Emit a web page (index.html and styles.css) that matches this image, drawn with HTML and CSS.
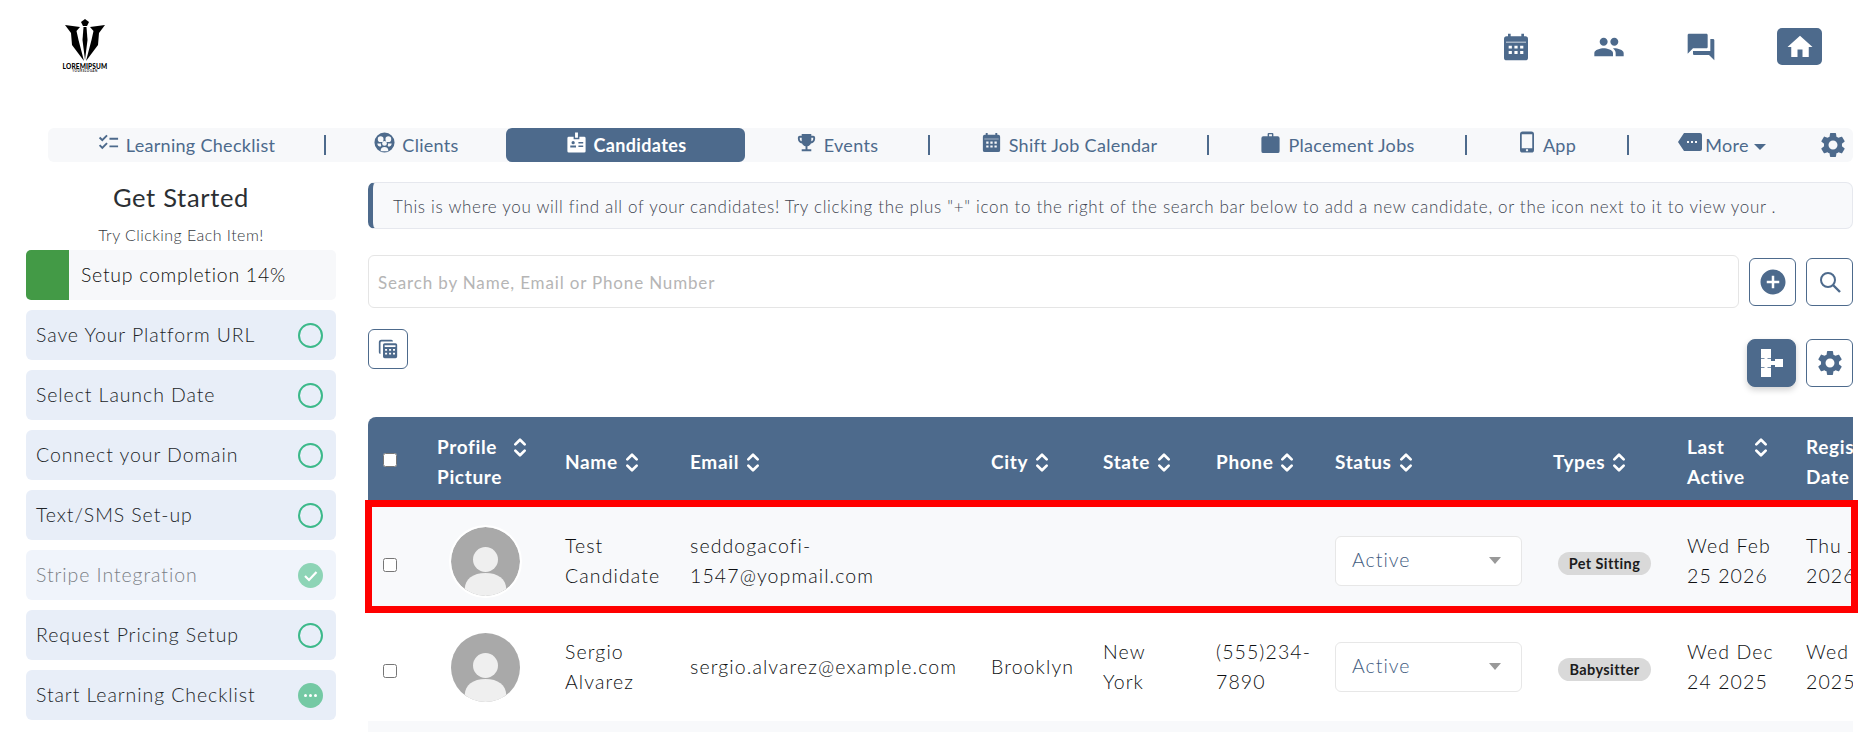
FILE: index.html
```html
<!DOCTYPE html>
<html lang="en">
<head>
<meta charset="utf-8">
<title>Candidates</title>
<link rel="stylesheet" href="styles.css">
</head>
<body>
<svg class="defs" aria-hidden="true">
  <symbol id="i-cal" viewBox="0 0 24 24"><path fill-rule="evenodd" d="M5 4h1V2h2v2h8V2h2v2h1a2 2 0 0 1 2 2v14a2 2 0 0 1-2 2H5a2 2 0 0 1-2-2V6a2 2 0 0 1 2-2zM4.500 8v.7h15V8zM6.500 11v2.200h2.400V11zM10.800 11v2.200h2.400V11zM15.100 11v2.200h2.400V11zM6.500 15v2.200h2.400V15zM10.800 15v2.200h2.400V15zM15.100 15v2.200h2.400V15z"/></symbol>
  <symbol id="i-people" viewBox="0 0 24 24"><path d="M16 11c1.660 0 2.990-1.340 2.990-3S17.660 5 16 5c-1.660 0-3 1.340-3 3s1.340 3 3 3zm-8 0c1.660 0 2.990-1.340 2.990-3S9.660 5 8 5C6.340 5 5 6.340 5 8s1.340 3 3 3zm0 2c-2.330 0-7 1.170-7 3.500V19h14v-2.500c0-2.330-4.670-3.500-7-3.500zm8 0c-.29 0-.62.02-.97.05 1.160.84 1.970 1.970 1.970 3.450V19h6v-2.500c0-2.330-4.670-3.500-7-3.500z"/></symbol>
  <symbol id="i-forum" viewBox="0 0 24 24"><path d="M21 6h-2v9H6v2c0 .55.45 1 1 1h11l4 4V7c0-.55-.45-1-1-1zm-4 6V3c0-.55-.45-1-1-1H3c-.55 0-1 .45-1 1v14l4-4h10c.55 0 1-.45 1-1z"/></symbol>
  <symbol id="i-home" viewBox="0 0 24 24"><path d="M10 20v-6h4v6h5v-8h3L12 3 2 12h3v8z"/></symbol>
  <symbol id="i-gear" viewBox="0 0 24 24"><path d="M19.140 12.940c.04-.3.06-.61.06-.94 0-.32-.02-.64-.07-.94l2.030-1.580c.18-.14.23-.41.12-.61l-1.920-3.320c-.12-.22-.37-.29-.59-.22l-2.390.96c-.5-.38-1.030-.7-1.620-.94l-.36-2.540c-.04-.24-.24-.41-.48-.41h-3.840c-.24 0-.43.17-.47.41l-.36 2.540c-.59.24-1.130.57-1.620.94l-2.390-.96c-.22-.08-.47 0-.59.22L2.740 8.870c-.12.21-.08.47.12.61l2.030 1.580c-.05.3-.09.63-.09.94s.02.64.07.94l-2.030 1.580c-.18.14-.23.41-.12.61l1.920 3.320c.12.22.37.29.59.22l2.390-.96c.5.38 1.030.7 1.620.94l.36 2.540c.05.24.24.41.48.41h3.840c.24 0 .44-.17.47-.41l.36-2.540c.59-.24 1.130-.56 1.620-.94l2.390.96c.22.08.47 0 .59-.22l1.920-3.320c.12-.22.07-.47-.12-.61l-2.010-1.580zM12 15.600c-1.980 0-3.600-1.620-3.600-3.600s1.620-3.600 3.600-3.600 3.600 1.620 3.600 3.600-1.620 3.600-3.600 3.600z"/></symbol>
  <symbol id="i-check" viewBox="0 0 24 24"><path d="M22 7h-9v2h9V7zm0 8h-9v2h9v-2zM5.540 11 2 7.460l1.410-1.410 2.120 2.120 4.240-4.240 1.410 1.410L5.540 11zm0 8L2 15.460l1.410-1.410 2.120 2.120 4.240-4.240 1.410 1.410L5.540 19z"/></symbol>
  <symbol id="i-clients" viewBox="0 0 24 24"><path fill-rule="evenodd" d="M12 1.500a10.500 10.500 0 1 1 0 21 10.500 10.500 0 0 1 0-21zM8 5.500a3 3 0 1 0 0 6 3 3 0 0 0 0-6zM16 5.500a3 3 0 1 0 0 6 3 3 0 0 0 0-6zM12 10.500a2.500 2.500 0 1 0 0 5 2.500 2.500 0 0 0 0-5zM4.500 13c.2 1.800 1.200 3 3 3.500l1.300-1c-.7-1-.7-1.500-.3-2.500zM19.500 13c-.2 1.800-1.200 3-3 3.500l-1.300-1c.7-1 .7-1.500.3-2.500zM8 21l8 0c.2-2.800-1.500-4.300-4-4.300s-4.200 1.500-4 4.300z"/></symbol>
  <symbol id="i-badge" viewBox="0 0 24 24"><path fill-rule="evenodd" d="M10.500 1.500h3v5.500h-3zM4 6h5v2.500h6V6h5a1.500 1.500 0 0 1 1.500 1.500V21A1.500 1.500 0 0 1 20 22.500H4A1.500 1.500 0 0 1 2.500 21V7.500A1.500 1.500 0 0 1 4 6zM8.500 10.500a1.700 1.700 0 1 0 0 3.400 1.700 1.700 0 0 0 0-3.400zM5.500 15v2.200h6V15zM14 11.500v1.600h5v-1.600zM14 15v1.600h5V15z"/></symbol>
  <symbol id="i-trophy" viewBox="0 0 24 24"><path d="M19 5h-2V3H7v2H5c-1.100 0-2 .9-2 2v1c0 2.550 1.920 4.630 4.390 4.940.63 1.500 1.980 2.630 3.610 2.960V19H7v2h10v-2h-4v-3.100c1.630-.33 2.980-1.460 3.610-2.960C19.080 12.630 21 10.550 21 8V7c0-1.100-.9-2-2-2zM5 8V7h2v3.820C5.840 10.400 5 9.300 5 8zm14 0c0 1.300-.84 2.400-2 2.820V7h2v1z"/></symbol>
  <symbol id="i-case" viewBox="0 0 24 24"><path fill-rule="evenodd" d="M9 5.500V3a1 1 0 0 1 1-1h4a1 1 0 0 1 1 1v2.500h4.500a2 2 0 0 1 2 2V21a2 2 0 0 1-2 2h-15a2 2 0 0 1-2-2V7.500a2 2 0 0 1 2-2zM10.500 5.500h3V3.500h-3z"/></symbol>
  <symbol id="i-phone" viewBox="0 0 16 24"><path fill-rule="evenodd" d="M3 0h10a3 3 0 0 1 3 3v18a3 3 0 0 1-3 3H3a3 3 0 0 1-3-3V3a3 3 0 0 1 3-3zM2 3v16h12V3zM8 20a1.300 1.300 0 1 0 .01 0z"/></symbol>
  <symbol id="i-tag" viewBox="0 0 24 18"><path fill-rule="evenodd" d="M6 0h16a2 2 0 0 1 2 2v14a2 2 0 0 1-2 2H6L0 9zM9 8v2h2V8zM13 8v2h2V8zM17 8v2h2V8z"/></symbol>
  <symbol id="i-plus" viewBox="0 0 24 24"><path d="M12 2C6.480 2 2 6.480 2 12s4.480 10 10 10 10-4.480 10-10S17.520 2 12 2zm5 11h-4v4h-2v-4H7v-2h4V7h2v4h4v2z"/></symbol>
  <symbol id="i-calc" viewBox="0 0 24 24"><path fill-rule="evenodd" d="M4 1h12a2 2 0 0 1 2 2H4.500A1.500 1.500 0 0 0 3 4.500V18a2 2 0 0 1-2-2V4a3 3 0 0 1 3-3zM8 5h13a2 2 0 0 1 2 2v14a2 2 0 0 1-2 2H8a2 2 0 0 1-2-2V7a2 2 0 0 1 2-2zM8 7.500v2h13v-2zM8.500 12v2h2.400v-2zM13.300 12v2h2.400v-2zM18 12v2h2.400v-2zM8.500 16.500v2h2.400v-2zM13.300 16.500v2h2.400v-2zM18 16.500v2h2.400v-2z"/></symbol>
  <symbol id="i-tree" viewBox="0 0 22 28"><path d="M0 0h10v9H6.500v.7H10v8.500H6.500v.7H10V28H0v-9.100h3.500v-.7H0V9.700h3.500V9H0zM10 12h4v-2h8v8h-8v-2h-4z"/></symbol>
  <symbol id="i-sort" viewBox="0 0 14 24"><path d="M2.500 9 7 4.500 11.500 9M2.500 15 7 19.500 11.500 15" fill="none" stroke="currentColor" stroke-width="2.600" stroke-linecap="round" stroke-linejoin="round"/></symbol>
  <symbol id="i-avatar" viewBox="0 0 69 69"><circle cx="34.500" cy="34.500" r="34.500" fill="#a9a9a9"/><circle cx="34.500" cy="32.500" r="12.500" fill="#efefef"/><path d="M13.700 62C14 52 22 46 34.500 46S55 52 55.300 62A34.500 34.500 0 0 1 13.700 62z" fill="#efefef"/></symbol>
</svg>

<header class="topbar">
  <div class="logo">
    <svg class="logo-mark" viewBox="0 0 50 46">
      <polygon points="25,1 29,4 27,8 23,8 21,4"/>
      <polygon points="23.500,9 26.500,9 27.500,22 25,42 22.500,22"/>
      <polygon points="5,7 20,9 16.500,13 18.500,22 24,43 12,27 11,15"/>
      <polygon points="45,7 30,9 33.500,13 31.500,22 26,43 38,27 39,15"/>
    </svg>
    <span class="logo-name">LOREMIPSUM</span>
    <span class="logo-tag">YOURSLOGAN</span>
  </div>
  <nav class="top-icons">
    <svg class="top-icon"><use href="#i-cal"/></svg>
    <svg class="top-icon"><use href="#i-people"/></svg>
    <svg class="top-icon"><use href="#i-forum"/></svg>
    <a class="home-btn"><svg class="home-icon"><use href="#i-home"/></svg></a>
  </nav>
</header>

<nav class="tabs">
  <a class="tab"><svg class="tab-icon"><use href="#i-check"/></svg>Learning Checklist</a>
  <span class="sep"></span>
  <a class="tab"><svg class="tab-icon"><use href="#i-clients"/></svg>Clients</a>
  <a class="tab active"><svg class="tab-icon"><use href="#i-badge"/></svg>Candidates</a>
  <a class="tab"><svg class="tab-icon"><use href="#i-trophy"/></svg>Events</a>
  <span class="sep"></span>
  <a class="tab"><svg class="tab-icon"><use href="#i-cal"/></svg>Shift Job Calendar</a>
  <span class="sep"></span>
  <a class="tab"><svg class="tab-icon"><use href="#i-case"/></svg>Placement Jobs</a>
  <span class="sep"></span>
  <a class="tab tab-app"><svg class="tab-icon phone"><use href="#i-phone"/></svg>App</a>
  <span class="sep"></span>
  <a class="tab tab-more"><svg class="tab-icon tag"><use href="#i-tag"/></svg>More<span class="caret"></span></a>
  <svg class="tab-gear"><use href="#i-gear"/></svg>
</nav>

<main class="main">
  <aside class="sidebar">
    <h2 class="side-title">Get Started</h2>
    <p class="side-sub">Try Clicking Each Item!</p>
    <div class="progress"><span class="progress-fill"></span><span class="progress-text">Setup completion 14%</span></div>
    <a class="step">Save Your Platform URL<span class="ring"></span></a>
    <a class="step">Select Launch Date<span class="ring"></span></a>
    <a class="step">Connect your Domain<span class="ring"></span></a>
    <a class="step">Text/SMS Set-up<span class="ring"></span></a>
    <a class="step done">Stripe Integration
      <svg class="state" viewBox="0 0 25 25"><circle cx="12.500" cy="12.500" r="12.500" fill="#8dd4b6"/><path d="M7 13l4 4 7.500-8" fill="none" stroke="#fff" stroke-width="2.200"/></svg>
    </a>
    <a class="step">Request Pricing Setup<span class="ring"></span></a>
    <a class="step">Start Learning Checklist
      <svg class="state" viewBox="0 0 25 25"><circle cx="12.500" cy="12.500" r="12.500" fill="#74c9a4"/><circle cx="7.500" cy="12.500" r="1.500" fill="#fff"/><circle cx="12.500" cy="12.500" r="1.500" fill="#fff"/><circle cx="17.500" cy="12.500" r="1.500" fill="#fff"/></svg>
    </a>
  </aside>

  <section class="content">
    <div class="notice">This is where you will find all of your candidates! Try clicking the plus "+" icon to the right of the search bar below to add a new candidate, or the icon next to it to view your .</div>

    <div class="search-row">
      <input class="search" type="text" placeholder="Search by Name, Email or Phone Number">
      <button class="sq-btn"><svg class="plus-icon"><use href="#i-plus"/></svg></button>
      <button class="sq-btn"><svg class="mag-icon" viewBox="0 0 24 24"><circle cx="10" cy="10" r="7" fill="none" stroke="currentColor" stroke-width="2"/><path d="M15 15l7 7" stroke="currentColor" stroke-width="2.400"/></svg></button>
    </div>

    <div class="tool-row">
      <button class="calc-btn"><svg class="calc-icon"><use href="#i-calc"/></svg></button>
      <div class="tool-right">
        <button class="sq-btn tree-btn"><svg class="tree-icon"><use href="#i-tree"/></svg></button>
        <button class="sq-btn"><svg class="gear-icon"><use href="#i-gear"/></svg></button>
      </div>
    </div>

    <div class="table-wrap">
      <table class="grid">
        <colgroup>
          <col class="c-check"><col class="c-pic"><col class="c-name"><col class="c-email"><col class="c-city"><col class="c-state"><col class="c-phone"><col class="c-status"><col class="c-types"><col class="c-last"><col class="c-reg">
        </colgroup>
        <thead>
          <tr>
            <th><input type="checkbox" class="cb"></th>
            <th><div class="th two"><span class="lbl">Profile Picture</span><svg class="sort"><use href="#i-sort"/></svg></div></th>
            <th><div class="th"><span>Name</span><svg class="sort"><use href="#i-sort"/></svg></div></th>
            <th><div class="th"><span>Email</span><svg class="sort"><use href="#i-sort"/></svg></div></th>
            <th><div class="th"><span>City</span><svg class="sort"><use href="#i-sort"/></svg></div></th>
            <th><div class="th"><span>State</span><svg class="sort"><use href="#i-sort"/></svg></div></th>
            <th><div class="th"><span>Phone</span><svg class="sort"><use href="#i-sort"/></svg></div></th>
            <th><div class="th"><span>Status</span><svg class="sort"><use href="#i-sort"/></svg></div></th>
            <th><div class="th"><span>Types</span><svg class="sort"><use href="#i-sort"/></svg></div></th>
            <th><div class="th two"><span class="lbl narrow">Last Active</span><svg class="sort"><use href="#i-sort"/></svg></div></th>
            <th><div class="th two"><span class="lbl narrow">Registered Date</span></div></th>
          </tr>
        </thead>
        <tbody>
          <tr class="row-first">
            <td><input type="checkbox" class="cb"></td>
            <td><svg class="avatar ringed"><use href="#i-avatar"/></svg></td>
            <td>Test Candidate</td>
            <td>seddogacofi-1547@yopmail.com</td>
            <td></td>
            <td></td>
            <td></td>
            <td><div class="select">Active<span class="sel-caret"></span></div></td>
            <td><span class="pill">Pet Sitting</span></td>
            <td>Wed Feb 25 2026</td>
            <td class="nowrap-cell">Thu Jan<br>2026</td>
          </tr>
          <tr class="row-second">
            <td><input type="checkbox" class="cb"></td>
            <td><svg class="avatar"><use href="#i-avatar"/></svg></td>
            <td>Sergio Alvarez</td>
            <td>sergio.alvarez@example.com</td>
            <td>Brooklyn</td>
            <td>New<br>York</td>
            <td>(555)234-7890</td>
            <td><div class="select">Active<span class="sel-caret"></span></div></td>
            <td><span class="pill">Babysitter</span></td>
            <td>Wed Dec 24 2025</td>
            <td class="nowrap-cell">Wed Dec<br>2025</td>
          </tr>
          <tr class="row-third"><td colspan="11"></td></tr>
        </tbody>
      </table>
      <div class="highlight"></div>
    </div>
  </section>
</main>
</body>
</html>
```

FILE: styles.css
```css
* { box-sizing: border-box; }
html, body { margin: 0; height: 732px; overflow: hidden; background: #fff; }
body { font-family: "Lato", "Open Sans", sans-serif; color: #212529; font-size: 18px; font-weight: 300; }
.defs { position: absolute; width: 0; height: 0; }
svg { fill: currentColor; display: block; flex: none; }
button { padding: 0; background: #fff; font: inherit; }

.topbar { height: 128px; display: flex; justify-content: space-between; align-items: flex-start; padding: 18px 47px 0 60px; }
.logo { width: 50px; display: flex; flex-direction: column; align-items: center; color: #000; }
.logo-mark { width: 50px; height: 46px; }
.logo-name { font-size: 6.500px; font-weight: 900; line-height: 6px; letter-spacing: .15px; color: #000; }
.logo-tag { font-size: 3px; font-weight: 700; line-height: 3px; letter-spacing: .5px; color: #222; }
.top-icons { display: flex; align-items: center; color: #4d6a8c; padding-top: 10px; }
.top-icon { width: 32px; height: 32px; margin-right: 60px; }
.top-icon:nth-child(1) { margin-right: 61px; }
.top-icon:nth-child(3) { margin-right: 60px; }
.home-btn { width: 45px; height: 37px; background: #4d6a8c; border-radius: 5px; display: flex; align-items: center; justify-content: center; color: #fff; }
.home-icon { width: 30px; height: 30px; }

.tabs { margin: 0 16px 0 48px; height: 34px; background: #f7f8fa; border-radius: 6px; display: grid; align-items: center; grid-template-columns: 276px 2px 180px 239px 183px 2px 277px 2px 256px 2px 160px 2px 180px 1fr; color: #4d6a8c; font-size: 18px; letter-spacing: .3px; font-weight: 400; }
.tab { height: 34px; display: flex; align-items: center; justify-content: center; gap: 6px; }
.tab-icon { width: 23px; height: 23px; margin-bottom: 6px; }
.tab-icon.phone { width: 14px; height: 24px; margin-right: 3px; }
.tab-icon.tag { width: 24px; height: 18px; margin-right: -3px; }
.tab-app { padding-left: 2px; }
.tab-more { padding-left: 6px; }
.tab.active { background: #4d6a8c; color: #fff; font-weight: 700; border-radius: 6px; letter-spacing: .35px; }
.sep { width: 2px; height: 20px; background: #4d6a8c; }
.caret { width: 0; height: 0; border-left: 6px solid transparent; border-right: 6px solid transparent; border-top: 6px solid #4d6a8c; margin-top: 3px; margin-left: -1px; }
.tab-gear { width: 30px; height: 30px; justify-self: end; margin-right: 5px; }

.main { display: grid; grid-template-columns: 310px 1485px; column-gap: 32px; padding-left: 26px; }
.side-title { font-size: 25.500px; font-weight: 400; line-height: 30px; margin: 20px 0 0; text-align: center; letter-spacing: .68px; color: #2b2f33; }
.side-sub { font-size: 16px; line-height: 20px; margin: 13px 0 5px; text-align: center; color: #33383d; letter-spacing: .45px; }
.progress { height: 50px; background: #f7f8fa; border-radius: 5px; display: flex; align-items: center; margin-bottom: 10px; }
.progress-fill { width: 43px; height: 50px; background: #439a46; border-radius: 5px 0 0 5px; }
.progress-text { margin-left: 12px; padding-bottom: 1px; font-size: 19.500px; letter-spacing: .72px; color: #111; }
.step { height: 50px; margin-bottom: 10px; padding: 0 10px 2px; background: #e8eef8; border-radius: 6px; display: flex; align-items: center; justify-content: space-between; color: #212529; font-size: 19.500px; letter-spacing: .92px; }
.step.done { background: #f0f4fb; color: #7b7f86; }
.ring { width: 25px; height: 25px; border: 2.500px solid #3cb98a; border-radius: 50%; margin: 2px 3px 0 0; }
.state { width: 25px; height: 25px; margin: 2px 3px 0 0; }

.notice { margin-top: 20px; height: 47px; background: #f8f9fb; border: 1px solid #e6e8ee; border-left: 5px solid #4d6a8c; border-radius: 7px; display: flex; align-items: center; padding: 1px 0 0 20px; font-size: 17px; color: #3f4652; letter-spacing: .68px; white-space: nowrap; }
.search-row { margin-top: 26px; display: flex; align-items: center; gap: 10px; }
.search { flex: 1; min-width: 0; height: 53px; border: 1px solid #e5e5e5; border-radius: 6px; padding: 1px 9px 0; font: inherit; font-size: 17px; font-weight: 400; letter-spacing: .84px; outline: 0; }
.search::placeholder { color: #b5b5b5; opacity: 1; }
.sq-btn { width: 47px; height: 48px; border: 1px solid #4d6a8c; border-radius: 6px; display: flex; align-items: center; justify-content: center; color: #4d6a8c; }
.plus-icon { width: 30px; height: 30px; }
.mag-icon { width: 24px; height: 24px; }
.gear-icon { width: 30px; height: 30px; }
.tool-row { margin-top: 21px; height: 58px; display: flex; justify-content: space-between; align-items: flex-start; }
.calc-btn { width: 40px; height: 40px; border: 1px solid #4d6a8c; border-radius: 6px; display: flex; align-items: center; justify-content: center; color: #4d6a8c; }
.calc-icon { width: 20px; height: 20px; }
.tool-right { display: flex; gap: 10px; margin-top: 10px; }
.tree-btn { width: 49px; background: #4d6a8c; color: #fff; border-radius: 8px; box-shadow: 0 3px 6px rgba(0,0,0,.18); }
.tree-icon { width: 22px; height: 28px; }

.table-wrap { position: relative; margin-top: 30px; }
.grid { width: 1545px; table-layout: fixed; border-collapse: collapse; clip-path: inset(0 60px 0 0 round 8px 0 0 0); }
.c-check { width: 57px; } .c-pic { width: 128px; } .c-name { width: 125px; } .c-email { width: 301px; }
.c-city { width: 112px; } .c-state { width: 113px; } .c-phone { width: 119px; } .c-status { width: 218px; }
.c-types { width: 134px; } .c-last { width: 119px; } .c-reg { width: 119px; }
.grid thead tr { height: 90px; background: #4d6a8c; color: #fff; }
.grid th { text-align: left; padding: 0 0 0 12px; font-size: 19px; font-weight: 700; line-height: 30px; letter-spacing: .65px; }
.grid th:first-child, .grid td:first-child { padding-left: 15px; }
.th { display: flex; align-items: center; gap: 6px; }
.th.two { align-items: flex-start; }
.th.two .sort { margin-top: 3px; }
.lbl { width: 69px; }
.lbl.narrow { width: 60px; }
.sort { width: 16px; height: 25px; color: #fff; }
.cb { width: 14px; height: 14px; margin: 0; display: block; }
thead .cb { margin-top: -4px; }
tbody .cb { margin-top: 7px; }
.grid td { padding: 0 10px 0 12px; font-size: 19.500px; line-height: 30px; vertical-align: middle; color: #0e1012; letter-spacing: 1.1px; }
.row-first { height: 106px; background: #f8f9fb; }
.row-first td { padding-top: 2px; }
.row-second { height: 108px; }
.row-third { height: 40px; background: #f8f9fb; }
.avatar { width: 69px; height: 69px; margin-left: 14px; }
.avatar.ringed { border-radius: 50%; box-shadow: 0 0 0 2px #fff; }
.nowrap-cell { white-space: nowrap; }
.select { width: 187px; height: 50px; background: #fff; border: 1px solid #e7e7e7; border-radius: 6px; display: flex; align-items: center; justify-content: space-between; padding: 0 20px 2px 16px; color: #3f5c80; font-weight: 300; letter-spacing: 1px; }
.grid td .select { color: #3f5c80; }
.sel-caret { width: 0; height: 0; border-left: 6px solid transparent; border-right: 6px solid transparent; border-top: 7px solid #999; }
.pill { display: inline-block; margin-left: 5px; width: 93px; height: 23px; line-height: 23px; text-align: center; background: #d9d9d9; border-radius: 12px; font-size: 14.500px; font-weight: 700; letter-spacing: .4px; color: #1c1c1c; vertical-align: middle; }
.highlight { position: absolute; left: -3px; top: 83px; width: 1493px; height: 113px; border: 7px solid #ff0000; pointer-events: none; }
```
